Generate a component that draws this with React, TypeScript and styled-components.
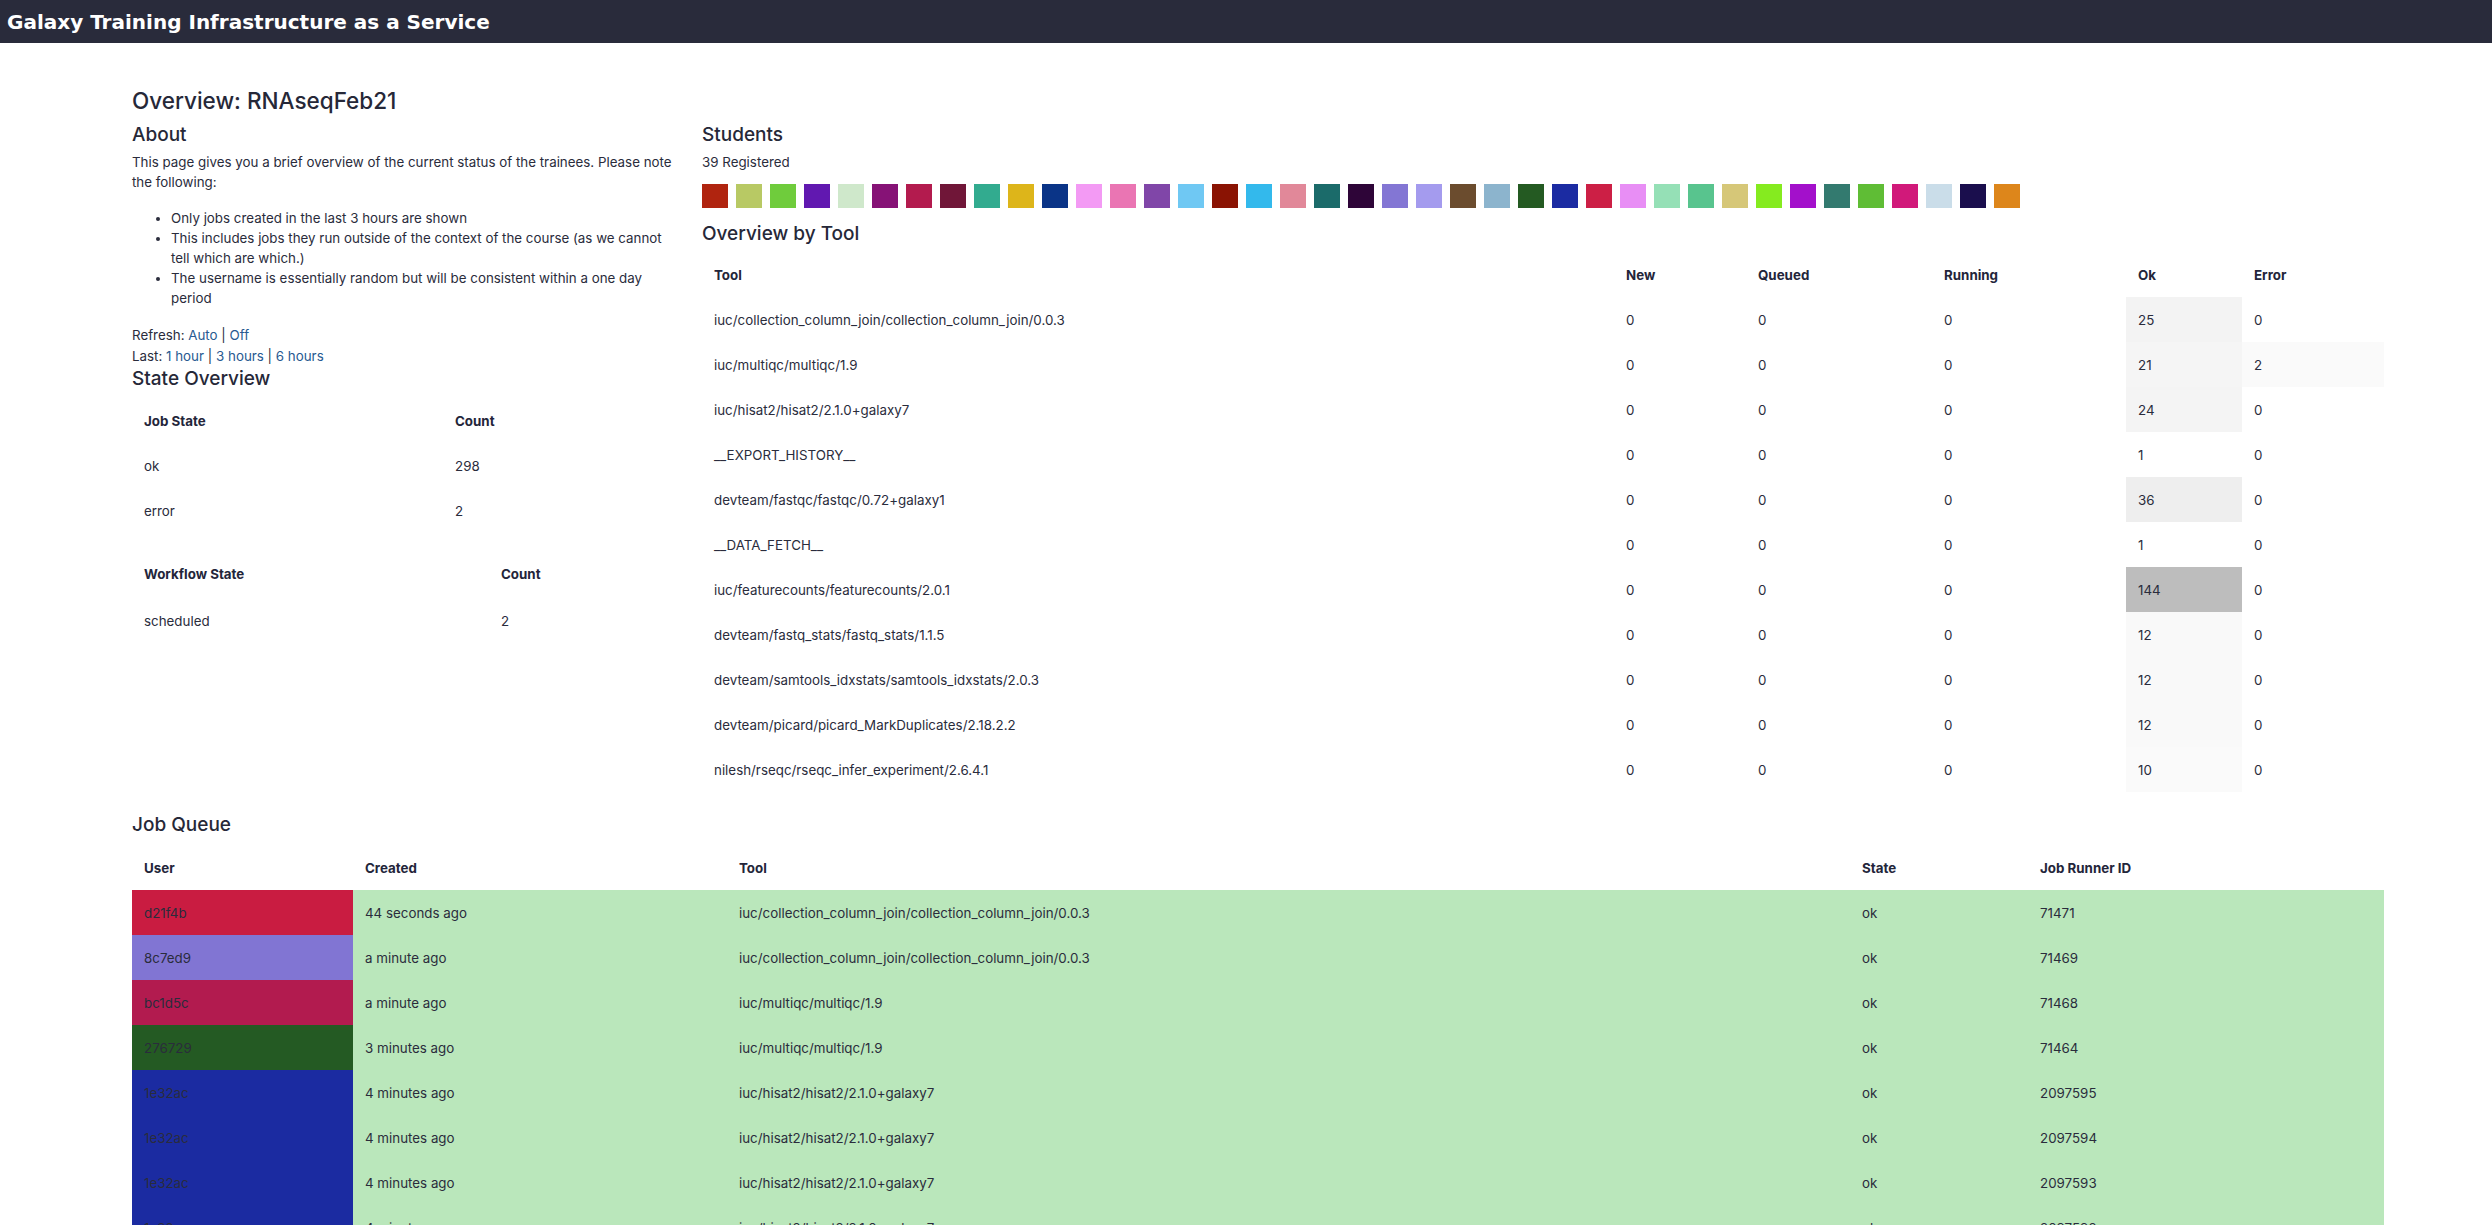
import React from "react";
import styled, { createGlobalStyle } from "styled-components";

const GlobalStyle = createGlobalStyle`
  html, body { margin: 0; padding: 0; background: #ffffff; }
  body {
    font-family: Inter, "Noto Sans", "Liberation Sans", sans-serif;
    font-size: 13.35px;
    line-height: 20px;
    color: #2a2c3c;
  }
  * { box-sizing: border-box; }
`;

const TopBar = styled.header`
  height: 43px;
  background: #292b3b;
  display: flex;
  align-items: center;
  padding-left: 7px;
`;

const Brand = styled.div`
  font-family: "DejaVu Sans", Verdana, sans-serif;
  font-weight: 700;
  font-size: 20px;
  color: #ffffff;
  letter-spacing: 0;
`;

const Main = styled.main`
  padding: 0 108px 40px 132px;
`;

const Title = styled.h1`
  margin: 44px 0 0 0;
  font-size: 22.5px;
  line-height: 27px;
  font-weight: 500;
  color: #262838;
`;

const Columns = styled.div`
  display: grid;
  grid-template-columns: 570px 1fr;
  margin-top: 9px;
`;

const Column = styled.section`
  display: flex;
  flex-direction: column;
  min-width: 0;
`;

const SectionTitle = styled.h2<{ $mt?: number; $mb?: number }>`
  margin: ${(p) => p.$mt ?? 0}px 0 ${(p) => p.$mb ?? 0}px 0;
  font-size: 19px;
  line-height: 23px;
  font-weight: 500;
  color: #262838;
`;

const Paragraph = styled.p`
  margin: 6px 0 0 0;
  padding-right: 27px;
`;

const Notes = styled.ul`
  margin: 16px 0 0 0;
  padding-left: 39px;
  padding-right: 27px;
`;

const Line = styled.div<{ $mt?: number }>`
  margin-top: ${(p) => p.$mt ?? 0}px;
  line-height: 21px;
`;

const Link = styled.a`
  color: #285a91;
  text-decoration: none;
`;

const Table = styled.table<{ $mt?: number; $w?: string }>`
  border-collapse: collapse;
  table-layout: fixed;
  width: ${(p) => p.$w ?? "100%"};
  margin-top: ${(p) => p.$mt ?? 0}px;
`;

const Th = styled.th<{ $w?: number; $h?: number }>`
  text-align: left;
  font-weight: 700;
  color: #23253a;
  height: ${(p) => p.$h ?? 45}px;
  padding: 0 12px;
  width: ${(p) => (p.$w ? `${p.$w}px` : "auto")};
`;

const Td = styled.td<{ $h?: number }>`
  height: ${(p) => p.$h ?? 45}px;
  padding: 0 12px;
  white-space: nowrap;
`;

const QueueRow = styled.tr`
  background: #bae7bb;
`;

const UserCell = styled.td<{ $c: string }>`
  height: 45px;
  padding: 0 12px;
  background: ${(p) => p.$c};
  color: #2a2c3c;
`;

const Registered = styled.div`
  margin-top: 6px;
`;

const Swatches = styled.div`
  display: flex;
  gap: 8px;
  margin-top: 12px;
`;

const Swatch = styled.span<{ $c: string }>`
  width: 26px;
  height: 24px;
  background: ${(p) => p.$c};
  flex: none;
`;

const studentColors = [
  "#b0240f", "#b8c964", "#6fcc3c", "#6118b0", "#cfe8cb", "#861276", "#b31b4e",
  "#701638", "#32ab8f", "#ddb51a", "#0a3487", "#f39af4", "#ea75b3", "#8046a8",
  "#6fc8f3", "#8a1303", "#33b9ec", "#e18899", "#1b6b6a", "#2e0538", "#8376d4",
  "#a49bee", "#6b4c2e", "#8cb4cd", "#245a22", "#1b2ba2", "#cc1f45", "#e88ef5",
  "#95e0b6", "#58c48e", "#d6c778", "#85eb1f", "#a310cb", "#337a6f", "#5fbd35",
  "#d1197a", "#cadde9", "#1a0e4d", "#dd861b",
];

type ToolRow = { tool: string; ok: number; error: number };

const toolRows: ToolRow[] = [
  { tool: "iuc/collection_column_join/collection_column_join/0.0.3", ok: 25, error: 0 },
  { tool: "iuc/multiqc/multiqc/1.9", ok: 21, error: 2 },
  { tool: "iuc/hisat2/hisat2/2.1.0+galaxy7", ok: 24, error: 0 },
  { tool: "__EXPORT_HISTORY__", ok: 1, error: 0 },
  { tool: "devteam/fastqc/fastqc/0.72+galaxy1", ok: 36, error: 0 },
  { tool: "__DATA_FETCH__", ok: 1, error: 0 },
  { tool: "iuc/featurecounts/featurecounts/2.0.1", ok: 144, error: 0 },
  { tool: "devteam/fastq_stats/fastq_stats/1.1.5", ok: 12, error: 0 },
  { tool: "devteam/samtools_idxstats/samtools_idxstats/2.0.3", ok: 12, error: 0 },
  { tool: "devteam/picard/picard_MarkDuplicates/2.18.2.2", ok: 12, error: 0 },
  { tool: "nilesh/rseqc/rseqc_infer_experiment/2.6.4.1", ok: 10, error: 0 },
];

const maxOk = 144;
const heat = (v: number, max: number, strength: number) =>
  v > 0 ? `rgba(0,0,0,${((v / max) * strength).toFixed(4)})` : "transparent";

type Job = { user: string; color: string; created: string; tool: string; state: string; id: string };

const HISAT = "iuc/hisat2/hisat2/2.1.0+galaxy7";
const jobs: Job[] = [
  { user: "d21f4b", color: "#c91c41", created: "44 seconds ago", tool: "iuc/collection_column_join/collection_column_join/0.0.3", state: "ok", id: "71471" },
  { user: "8c7ed9", color: "#8175d3", created: "a minute ago", tool: "iuc/collection_column_join/collection_column_join/0.0.3", state: "ok", id: "71469" },
  { user: "bc1d5c", color: "#b21b4f", created: "a minute ago", tool: "iuc/multiqc/multiqc/1.9", state: "ok", id: "71468" },
  { user: "276729", color: "#245a23", created: "3 minutes ago", tool: "iuc/multiqc/multiqc/1.9", state: "ok", id: "71464" },
  { user: "1e32ac", color: "#1b2ba1", created: "4 minutes ago", tool: HISAT, state: "ok", id: "2097595" },
  { user: "1e32ac", color: "#1b2ba1", created: "4 minutes ago", tool: HISAT, state: "ok", id: "2097594" },
  { user: "1e32ac", color: "#1b2ba1", created: "4 minutes ago", tool: HISAT, state: "ok", id: "2097593" },
  { user: "1e32ac", color: "#1b2ba1", created: "4 minutes ago", tool: HISAT, state: "ok", id: "2097592" },
  { user: "1e32ac", color: "#1b2ba1", created: "5 minutes ago", tool: HISAT, state: "ok", id: "2097591" },
  { user: "1e32ac", color: "#1b2ba1", created: "5 minutes ago", tool: HISAT, state: "ok", id: "2097590" },
];

export default function App() {
  return (
    <>
      <GlobalStyle />
      <TopBar>
        <Brand>Galaxy Training Infrastructure as a Service</Brand>
      </TopBar>
      <Main>
        <Title>Overview: RNAseqFeb21</Title>
        <Columns>
          <Column>
            <SectionTitle>About</SectionTitle>
            <Paragraph>
              This page gives you a brief overview of the current status of the trainees. Please note
              the following:
            </Paragraph>
            <Notes>
              <li>Only jobs created in the last 3 hours are shown</li>
              <li>
                This includes jobs they run outside of the context of the course (as we cannot tell
                which are which.)
              </li>
              <li>The username is essentially random but will be consistent within a one day period</li>
            </Notes>
            <Line $mt={17}>
              Refresh: <Link href="#">Auto</Link> | <Link href="#">Off</Link>
            </Line>
            <Line>
              Last: <Link href="#">1 hour</Link> | <Link href="#">3 hours</Link> |{" "}
              <Link href="#">6 hours</Link>
            </Line>
            <SectionTitle>State Overview</SectionTitle>
            <Table $mt={8}>
              <thead>
                <tr>
                  <Th $w={311}>Job State</Th>
                  <Th>Count</Th>
                </tr>
              </thead>
              <tbody>
                <tr>
                  <Td>ok</Td>
                  <Td>298</Td>
                </tr>
                <tr>
                  <Td>error</Td>
                  <Td>2</Td>
                </tr>
              </tbody>
            </Table>
            <Table $mt={17}>
              <thead>
                <tr>
                  <Th $w={357} $h={47}>Workflow State</Th>
                  <Th $h={47}>Count</Th>
                </tr>
              </thead>
              <tbody>
                <tr>
                  <Td $h={48}>scheduled</Td>
                  <Td $h={48}>2</Td>
                </tr>
              </tbody>
            </Table>
          </Column>
          <Column>
            <SectionTitle>Students</SectionTitle>
            <Registered>39 Registered</Registered>
            <Swatches>
              {studentColors.map((c, i) => (
                <Swatch key={i} $c={c} />
              ))}
            </Swatches>
            <SectionTitle $mt={14}>Overview by Tool</SectionTitle>
            <Table $mt={7}>
              <thead>
                <tr>
                  <Th $w={912}>Tool</Th>
                  <Th $w={132}>New</Th>
                  <Th $w={186}>Queued</Th>
                  <Th $w={194}>Running</Th>
                  <Th $w={116}>Ok</Th>
                  <Th>Error</Th>
                </tr>
              </thead>
              <tbody>
                {toolRows.map((r) => (
                  <tr key={r.tool}>
                    <Td>{r.tool}</Td>
                    <Td>0</Td>
                    <Td>0</Td>
                    <Td>0</Td>
                    <Td style={{ background: heat(r.ok, maxOk, 0.26) }}>{r.ok}</Td>
                    <Td style={{ background: heat(r.error, 2, 0.018) }}>{r.error}</Td>
                  </tr>
                ))}
              </tbody>
            </Table>
          </Column>
        </Columns>
        <SectionTitle $mt={21}>Job Queue</SectionTitle>
        <Table $mt={9}>
          <thead>
            <tr>
              <Th $w={221}>User</Th>
              <Th $w={374}>Created</Th>
              <Th $w={1123}>Tool</Th>
              <Th $w={178}>State</Th>
              <Th>Job Runner ID</Th>
            </tr>
          </thead>
          <tbody>
            {jobs.map((j) => (
              <QueueRow key={j.id}>
                <UserCell $c={j.color}>{j.user}</UserCell>
                <Td>{j.created}</Td>
                <Td>{j.tool}</Td>
                <Td>{j.state}</Td>
                <Td>{j.id}</Td>
              </QueueRow>
            ))}
          </tbody>
        </Table>
      </Main>
    </>
  );
}
